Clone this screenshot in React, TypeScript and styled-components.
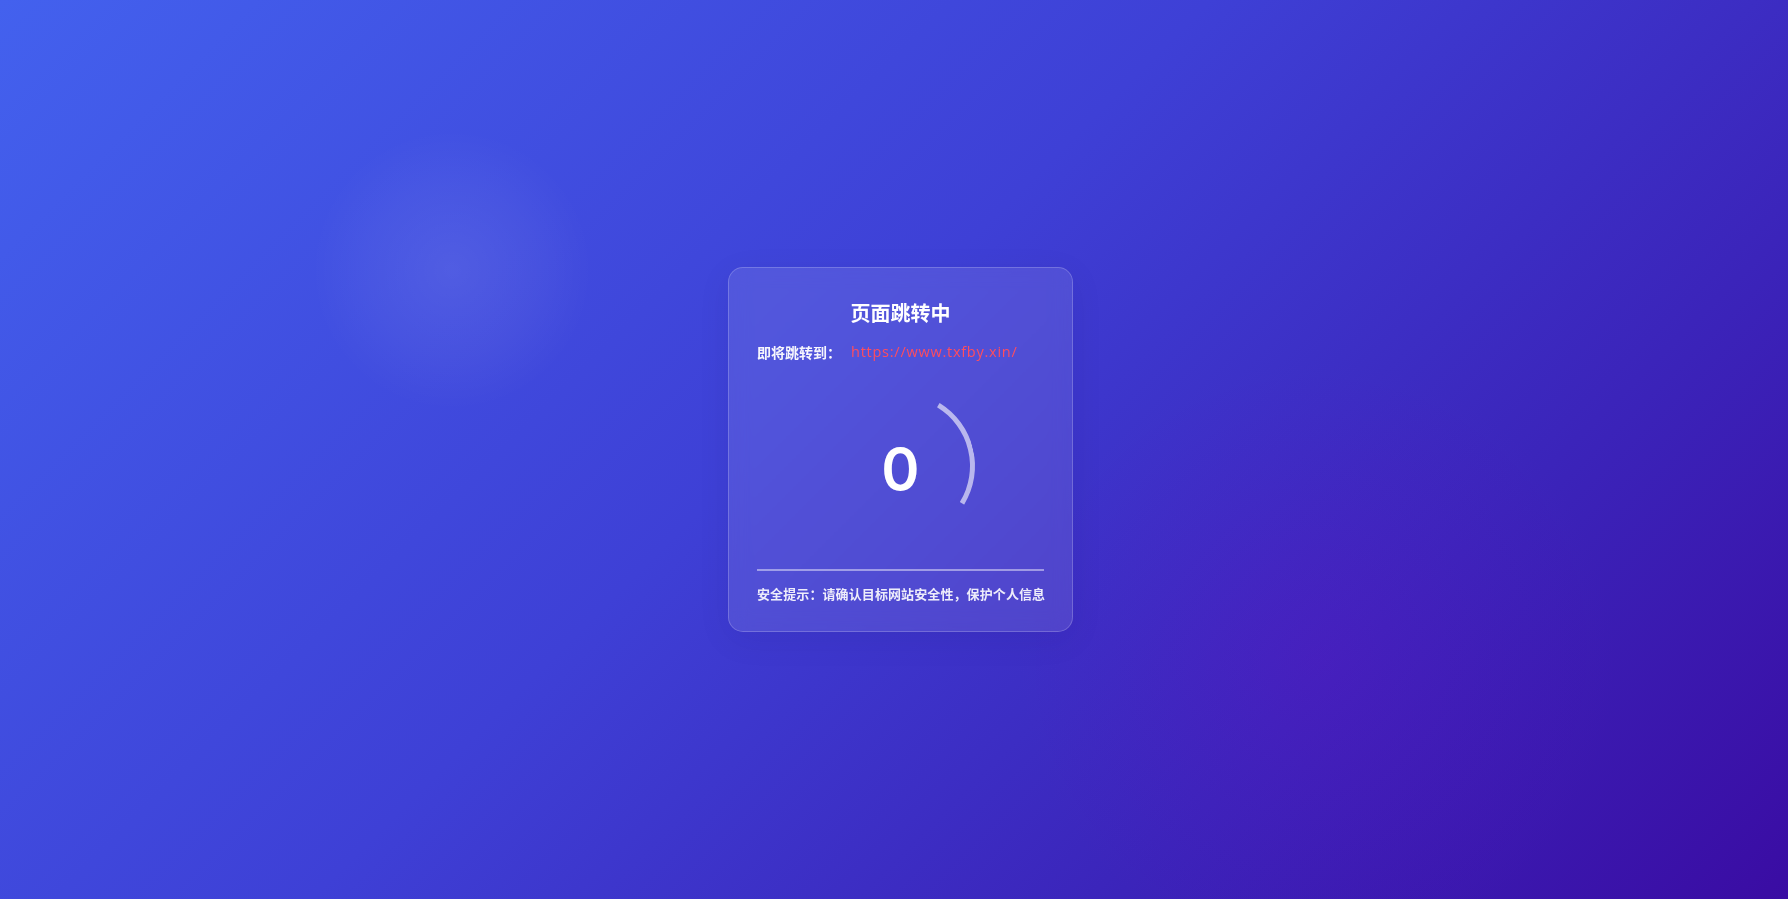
import React from "react";
import styled, { createGlobalStyle } from "styled-components";

const GlobalStyle = createGlobalStyle`
  * { box-sizing: border-box; }
  html, body { margin: 0; padding: 0; height: 100%; }
  body {
    font-family: "Noto Sans CJK SC", "Noto Sans", sans-serif;
    color: #fff;
  }
  #root { height: 100%; }
`;

const Page = styled.div`
  position: relative;
  width: 100%;
  height: 100vh;
  overflow: hidden;
  display: flex;
  align-items: center;
  justify-content: center;
  padding-left: 13px;
  background:
    radial-gradient(circle at 452px 270px, rgba(255, 255, 255, 0.085) 0px, rgba(255, 255, 255, 0.04) 85px, rgba(255, 255, 255, 0) 140px),
    radial-gradient(circle at 1317px 660px, rgba(114, 9, 200, 0.2) 0px, rgba(114, 9, 200, 0.08) 170px, rgba(114, 9, 200, 0) 300px),
    linear-gradient(135deg, #4361ee 0%, #3e40d6 45%, #3b24ba 75%, #3a0ca3 100%);
`;

const Card = styled.div`
  width: 345px;
  padding: 30px 28px 27px;
  border-radius: 15px;
  background: rgba(255, 255, 255, 0.1);
  border: 1px solid rgba(255, 255, 255, 0.2);
  box-shadow: 0 8px 32px rgba(20, 10, 90, 0.08);
  backdrop-filter: blur(10px);
  display: flex;
  flex-direction: column;
`;

const Title = styled.h1`
  margin: 0;
  font-size: 20px;
  line-height: 30px;
  font-weight: 700;
  text-align: center;
  color: #ffffff;
`;

const TargetRow = styled.div`
  margin-top: 13px;
  display: flex;
  align-items: center;
  font-size: 14px;
  line-height: 22px;
`;

const TargetLabel = styled.span`
  font-weight: 600;
  color: rgba(255, 255, 255, 0.95);
`;

const TargetUrl = styled.a`
  margin-left: 10px;
  font-family: "Open Sans", "Noto Sans", sans-serif;
  font-size: 14.5px;
  letter-spacing: 0.75px;
  color: #ff4d5e;
  text-decoration: none;
`;

const CounterWrap = styled.div`
  margin: 29px auto 0;
  width: 148px;
  height: 148px;
  display: grid;
  place-items: center;
`;

const Ring = styled.div`
  grid-area: 1 / 1;
  width: 148px;
  height: 148px;
  border-radius: 50%;
  border: 5px solid transparent;
  border-right-color: rgba(255, 255, 255, 0.6);
  transform: rotate(-13.5deg);
`;

const Count = styled.div`
  grid-area: 1 / 1;
  margin-top: 6px;
  font-family: "Inter", "Open Sans", sans-serif;
  font-size: 58px;
  font-weight: 600;
  line-height: 1;
  color: #ffffff;
`;

const Divider = styled.hr`
  margin: 29px 0 0;
  height: 2px;
  border: none;
  background: rgba(255, 255, 255, 0.45);
`;

const Notice = styled.p`
  margin: 13px 0 0;
  font-size: 13px;
  line-height: 20px;
  font-weight: 700;
  letter-spacing: 0.1px;
  color: rgba(255, 255, 255, 0.9);
  white-space: nowrap;
`;

export default function App() {
  return (
    <>
      <GlobalStyle />
      <Page>
        <Card>
          <Title>页面跳转中</Title>
          <TargetRow>
            <TargetLabel>即将跳转到：</TargetLabel>
            <TargetUrl href="#">https://www.txfby.xin/</TargetUrl>
          </TargetRow>
          <CounterWrap>
            <Ring />
            <Count>0</Count>
          </CounterWrap>
          <Divider />
          <Notice>安全提示：请确认目标网站安全性，保护个人信息</Notice>
        </Card>
      </Page>
    </>
  );
}
